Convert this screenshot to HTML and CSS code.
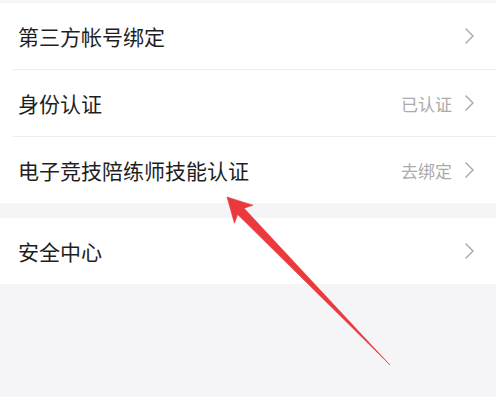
FILE: index.html
```html
<!DOCTYPE html>
<html lang="zh-CN">
<head>
<meta charset="utf-8">
<title>设置</title>
<link rel="stylesheet" href="styles.css">
</head>
<body>
<div class="page">
  <div class="group">
    <div class="row">
      <span class="title">第三方帐号绑定</span>
      <span class="right"><svg class="chev" viewBox="0 0 9 16" width="9" height="16"><polyline points="1,1 8,8 1,15"/></svg></span>
    </div>
    <div class="row">
      <span class="title">身份认证</span>
      <span class="right"><span class="label">已认证</span><svg class="chev" viewBox="0 0 9 16" width="9" height="16"><polyline points="1,1 8,8 1,15"/></svg></span>
    </div>
    <div class="row">
      <span class="title">电子竞技陪练师技能认证</span>
      <span class="right"><span class="label">去绑定</span><svg class="chev" viewBox="0 0 9 16" width="9" height="16"><polyline points="1,1 8,8 1,15"/></svg></span>
    </div>
  </div>
  <div class="group">
    <div class="row">
      <span class="title">安全中心</span>
      <span class="right"><svg class="chev" viewBox="0 0 9 16" width="9" height="16"><polyline points="1,1 8,8 1,15"/></svg></span>
    </div>
  </div>
  <svg class="arrow" viewBox="0 0 496 397" width="496" height="397">
    <polygon points="227,197 253,205.2 244.1,208.3 390,365 237.7,214.5 234.4,223.2"/>
  </svg>
</div>
</body>
</html>
```

FILE: styles.css
```css
html, body {
  margin: 0;
  padding: 0;
  background: #f5f5f7;
}
body {
  font-family: "Noto Sans CJK SC", "Noto Sans", sans-serif;
  width: 496px;
  height: 397px;
  overflow: hidden;
}
.page {
  position: relative;
  padding-top: 3px;
  height: 394px;
}
.group {
  background: #ffffff;
  padding-left: 13px;
  margin-bottom: 15px;
}
.row {
  height: 66px;
  display: flex;
  align-items: center;
  justify-content: space-between;
  padding-left: 5px;
  padding-right: 22px;
  border-bottom: 1px solid #ededed;
}
.row:last-child {
  border-bottom: none;
}
.title {
  font-size: 21px;
  color: #1e1e1e;
  letter-spacing: 0;
}
.right {
  display: flex;
  align-items: center;
  gap: 13px;
}
.label {
  font-size: 17px;
  color: #ababab;
}
.chev {
  display: block;
}
.chev polyline {
  fill: none;
  stroke: #a6a6a6;
  stroke-width: 1.4;
  stroke-linecap: round;
  stroke-linejoin: round;
}
.arrow {
  position: absolute;
  left: 0;
  top: 0;
  pointer-events: none;
}
.arrow polygon {
  fill: #ea3a3e;
  stroke: #ea3a3e;
  stroke-width: 0.6;
  stroke-linejoin: round;
}
```
